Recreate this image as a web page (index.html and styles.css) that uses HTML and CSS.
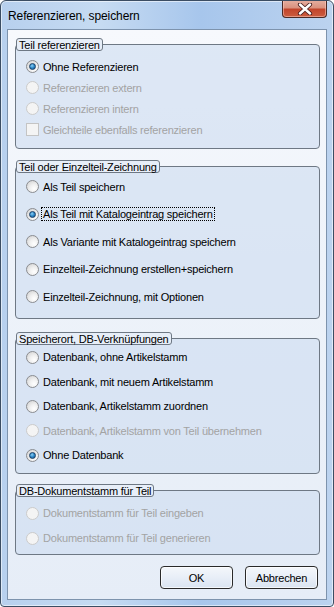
FILE: index.html
```html
<!DOCTYPE html>
<html lang="de">
<head>
    <meta charset="UTF-8">
    <title>Referenzieren, speichern</title>
    <link rel="stylesheet" href="styles.css">
</head>
<body>
    <div class="window">
        <div class="titlebar">
            <span class="title">Referenzieren, speichern</span>
            <div class="close">
                <svg width="16" height="12" viewBox="0 0 16 12">
                    <path d="M3 1.5 L13 10.5 M13 1.5 L3 10.5" stroke="#4a2020" stroke-width="4.2" stroke-linecap="round"/>
                    <path d="M3 1.5 L13 10.5 M13 1.5 L3 10.5" stroke="#ffffff" stroke-width="2.4" stroke-linecap="round"/>
                </svg>
            </div>
        </div>
        <div class="client">
            <div class="group g1">
                <div class="group-title">Teil referenzieren</div>
                <div class="rows">
                    <div class="row"><span class="radio checked"></span><span>Ohne Referenzieren</span></div>
                    <div class="row disabled"><span class="radio"></span><span>Referenzieren extern</span></div>
                    <div class="row disabled"><span class="radio"></span><span>Referenzieren intern</span></div>
                    <div class="row disabled"><span class="check"></span><span>Gleichteile ebenfalls referenzieren</span></div>
                </div>
            </div>

            <div class="group g2">
                <div class="group-title">Teil oder Einzelteil-Zeichnung</div>
                <div class="rows">
                    <div class="row"><span class="radio"></span><span>Als Teil speichern</span></div>
                    <div class="row"><span class="radio checked"></span><span class="focus">Als Teil mit Katalogeintrag speichern</span></div>
                    <div class="row"><span class="radio"></span><span>Als Variante mit Katalogeintrag speichern</span></div>
                    <div class="row"><span class="radio"></span><span>Einzelteil-Zeichnung erstellen+speichern</span></div>
                    <div class="row"><span class="radio"></span><span>Einzelteil-Zeichnung, mit Optionen</span></div>
                </div>
            </div>

            <div class="group g3">
                <div class="group-title">Speicherort, DB-Verknüpfungen</div>
                <div class="rows">
                    <div class="row"><span class="radio"></span><span>Datenbank, ohne Artikelstamm</span></div>
                    <div class="row"><span class="radio"></span><span>Datenbank, mit neuem Artikelstamm</span></div>
                    <div class="row"><span class="radio"></span><span>Datenbank, Artikelstamm zuordnen</span></div>
                    <div class="row disabled"><span class="radio"></span><span>Datenbank, Artikelstamm von Teil übernehmen</span></div>
                    <div class="row"><span class="radio checked"></span><span>Ohne Datenbank</span></div>
                </div>
            </div>

            <div class="group g4">
                <div class="group-title">DB-Dokumentstamm für Teil</div>
                <div class="rows">
                    <div class="row disabled"><span class="radio"></span><span>Dokumentstamm für Teil eingeben</span></div>
                    <div class="row disabled"><span class="radio"></span><span>Dokumentstamm für Teil generieren</span></div>
                </div>
            </div>

            <div class="buttons">
                <button class="btn">OK</button>
                <button class="btn">Abbrechen</button>
            </div>
        </div>
    </div>
</body>
</html>
```

FILE: styles.css
```css
html, body {
    margin: 0;
    padding: 0;
    background: #ffffff;
}
body {
    font-family: 'Liberation Sans', Arial, sans-serif;
    font-size: 11px;
    letter-spacing: -0.2px;
    color: #000;
}
.window {
    width: 334px;
    height: 607px;
    box-sizing: border-box;
    border: 1px solid #3b4d63;
    border-radius: 6px 6px 4px 4px;
    background: linear-gradient(to right, #b7d0ee 0%, #c6dbf2 30%, #a7c6ec 60%, #bcd3ef 100%);
    box-shadow: inset 0 0 0 1px rgba(255, 255, 255, 0.55);
    display: flex;
    flex-direction: column;
    padding: 0 6px 6px 6px;
    overflow: hidden;
}
.titlebar {
    height: 28px;
    display: flex;
    align-items: flex-start;
    justify-content: space-between;
}
.title {
    font-size: 12px;
    line-height: 12px;
    letter-spacing: -0.1px;
    margin-top: 9px;
    margin-left: 1px;
    color: #000;
}
.close {
    width: 45px;
    height: 18px;
    margin-top: -1px;
    box-sizing: border-box;
    border: 1px solid #4a2a26;
    border-top: none;
    border-radius: 0 0 4px 4px;
    background: linear-gradient(to bottom, #e6b0a2 0%, #da927f 45%, #c2452c 55%, #cb5d40 100%);
    box-shadow: inset 0 0 0 1px rgba(255, 210, 200, 0.5);
    display: flex;
    align-items: center;
    justify-content: center;
}
.client {
    flex: 1;
    border: 1px solid #7d93ad;
    background: linear-gradient(to bottom, #f7f9fd 0%, #eef3fa 40%, #e6edf7 100%);
    display: flex;
    flex-direction: column;
}
.group {
    margin: 0 6px 0 7px;
    border: 1px solid #6e7884;
    border-radius: 4px;
    background: rgba(205, 220, 240, 0.6);
    display: flex;
    flex-direction: column;
}
.group-title {
    align-self: flex-start;
    margin: -7px 0 0 0;
    height: 13px;
    line-height: 12px;
    box-sizing: border-box;
    padding: 0 2px 0 2px;
    border: 1px solid #6e7884;
    border-radius: 3px;
    background: #e7eef8;
    white-space: nowrap;
}
.rows {
    display: flex;
    flex-direction: column;
    padding-left: 10px;
}
.row {
    display: flex;
    align-items: center;
    gap: 4px;
    white-space: nowrap;
}
.row.disabled {
    color: #a3a3a3;
}
.g1 { margin-top: 14px; }
.g1 .rows { padding-top: 5px; padding-bottom: 8px; }
.g1 .row { height: 21px; }
.g2 { margin-top: 17px; }
.g2 .rows { padding-top: 0; padding-bottom: 7.5px; }
.g2 .row { height: 27.5px; }
.g3 { margin-top: 19px; }
.g3 .rows { padding-top: 0; padding-bottom: 5.5px; }
.g3 .row { height: 24.5px; }
.g4 { margin-top: 16px; }
.g4 .rows { padding-top: 3.5px; padding-bottom: 3.5px; }
.g4 .row { height: 25px; }

.radio {
    width: 13px;
    height: 13px;
    box-sizing: border-box;
    border-radius: 50%;
    border: 1px solid #8a8c90;
    background: radial-gradient(circle at 65% 70%, #ffffff 0%, #f0f0f0 40%, #cdcdcd 100%);
    display: flex;
    align-items: center;
    justify-content: center;
    flex: none;
}
.radio.checked::after {
    content: "";
    width: 7px;
    height: 7px;
    box-sizing: border-box;
    border-radius: 50%;
    border: 1px solid #1a3f66;
    background: radial-gradient(circle at 40% 35%, #8fd0f5 0%, #2b87c8 50%, #174f85 100%);
}
.disabled .radio {
    border-color: #cbcbcb;
    background: #f4f4f4;
}
.check {
    width: 13px;
    height: 13px;
    box-sizing: border-box;
    border: 1px solid #c4c4c4;
    background: #f4f4f4;
    flex: none;
}
.focus {
    outline: 1px dotted #000;
    outline-offset: 0;
    padding: 0 1px;
    margin-left: -1px;
}
.buttons {
    margin-top: 11px;
    display: flex;
    justify-content: flex-end;
    gap: 12px;
    padding-right: 8px;
}
.btn {
    width: 73px;
    height: 23px;
    box-sizing: border-box;
    border: 1px solid #2a2a2a;
    border-radius: 4px;
    background: linear-gradient(to bottom, #f4f7fb 0%, #e8eef7 50%, #dae4f1 100%);
    box-shadow: inset 0 0 0 1px rgba(255, 255, 255, 0.7);
    font-family: 'Liberation Sans', Arial, sans-serif;
    font-size: 11px;
    letter-spacing: -0.2px;
    color: #000;
    padding: 0;
}
```
